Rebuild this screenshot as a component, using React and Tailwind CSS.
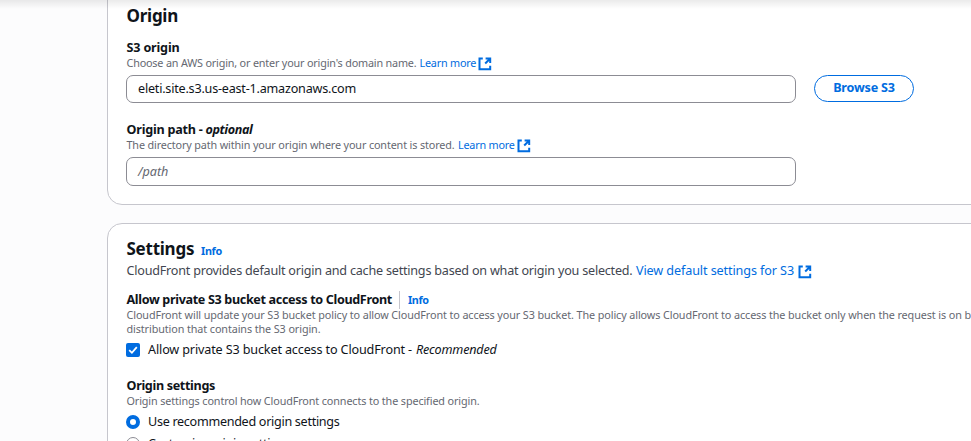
function ExternalIcon({ className = "" }) {
  return (
    <svg className={`shrink-0 ${className}`} width="14" height="14" viewBox="0 0 14 14" fill="none" stroke="#006ce0" strokeWidth="2">
      <path d="M4.8 1.5H1.5v10.7h10.7V8.8" />
      <path d="M7.6 1.5h4.6v4.4M12 1.7 7.2 6.5" />
    </svg>
  );
}

function Label({ children, className = "" }) {
  return <div className={`h-[18px] text-[12.6px] leading-[18px] font-bold text-[#0f141a] ${className}`}>{children}</div>;
}

function Hint({ children, className = "" }) {
  return <div className={`flex h-[14px] text-[10.8px] leading-[14px] text-[#656871] ${className}`}>{children}</div>;
}

function Radio({ checked }) {
  return (
    <span
      className={`size-[14px] shrink-0 rounded-full bg-white ${checked ? "border-[4.5px] border-[#006ce0]" : "border border-[#8c8c94]"}`}
    />
  );
}

export default function App() {
  return (
    <div className="relative h-[441px] w-[971px] overflow-hidden bg-[#fcfcfd] pl-[107px] font-['Noto_Sans','Open_Sans',sans-serif] whitespace-nowrap">
      <div className="absolute inset-x-0 top-0 h-[9px] bg-linear-to-b from-black/8 to-transparent" />

      <section className="-mt-[20px] h-[225px] w-[900px] rounded-[15px] border border-[#c6c6cd] bg-white pt-[26px] pl-[18px]">
        <h2 className="h-[18px] pl-[0.5px] text-[17px] leading-[18px] font-bold tracking-[-0.25px] text-[#0f141a]">Origin</h2>

        <Label className="mt-[14px] pl-[0.5px] tracking-[-0.18px]">S3 origin</Label>
        <Hint className="-mt-px pl-[0.5px] tracking-[-0.176px]">
          <span className="w-[293px]">Choose an AWS origin, or enter your origin's domain name.</span>
          <a className="w-[58.5px] tracking-[-0.2px] text-[#006ce0]">Learn more</a>
          <ExternalIcon className="mt-px" />
        </Hint>
        <div className="mt-[5px] flex items-start gap-[18px]">
          <div className="flex h-[28px] w-[670px] items-center rounded-[7px] border border-[#8c8c94] pl-[11px] text-[12.6px] tracking-[-0.212px] text-[#0f141a]">
            eleti.site.s3.us-east-1.amazonaws.com
          </div>
          <button className="h-[27px] w-[100px] rounded-full border border-[#006ce0] pb-px text-[12.6px] leading-[24px] font-bold tracking-[-0.2px] text-[#006ce0]">
            Browse S3
          </button>
        </div>

        <Label className="mt-[18px] flex gap-[3px] pl-[0.5px] tracking-[-0.23px]">
          <span>Origin path -</span>
          <i className="tracking-[-0.4px]">optional</i>
        </Label>
        <Hint className="-mt-px pl-[0.5px] tracking-[-0.133px]">
          <span className="w-[331.5px]">The directory path within your origin where your content is stored.</span>
          <a className="w-[59px] tracking-[-0.2px] text-[#006ce0]">Learn more</a>
          <ExternalIcon className="mt-px" />
        </Hint>
        <div className="mt-[5px] flex h-[29px] w-[670px] items-center rounded-[7px] border border-[#8c8c94] pt-px pl-[11px] text-[12.6px] text-[#656871] italic">
          /path
        </div>
      </section>

      <section className="mt-[18px] h-[300px] w-[900px] rounded-[15px] border border-[#c6c6cd] bg-white pt-[16px] pl-[18px]">
        <div className="flex h-[18px] items-baseline">
          <h2 className="w-[75px] pl-[0.5px] text-[17px] leading-[18px] font-bold tracking-[-0.25px] text-[#0f141a]">Settings</h2>
          <a className="text-[10.8px] leading-[18px] font-bold tracking-[-0.3px] text-[#006ce0]">Info</a>
        </div>
        <div className="mt-[4px] flex h-[18px] items-center pl-[0.5px] text-[12.6px] leading-[18px] tracking-[-0.22px] text-[#424650]">
          <span className="w-[509.5px]">CloudFront provides default origin and cache settings based on what origin you selected.</span>
          <a className="w-[162px] tracking-[-0.1px] text-[#006ce0]">View default settings for S3</a>
          <ExternalIcon className="mt-px" />
        </div>

        <div className="mt-[11px] flex h-[18px] items-center">
          <Label className="w-[273px] pl-[0.5px] tracking-[-0.345px]">Allow private S3 bucket access to CloudFront</Label>
          <span className="h-[18px] w-px bg-[#c6c6cd]" />
          <a className="ml-[8px] text-[10.8px] leading-[18px] font-bold tracking-[-0.4px] text-[#006ce0]">Info</a>
        </div>
        <Hint className="-mt-px pl-[0.5px] tracking-[-0.101px]">
          CloudFront will update your S3 bucket policy to allow CloudFront to access your S3 bucket. The policy allows
          CloudFront to access the bucket only when the request is on b
        </Hint>
        <Hint className="pl-[0.5px] tracking-[-0.098px]">distribution that contains the S3 origin.</Hint>
        <div className="mt-[5px] flex h-[18px] items-center text-[12.6px] leading-[18px] text-[#0f141a]">
          <span className="flex size-[14px] items-center justify-center rounded-[2px] bg-[#006ce0]">
            <svg width="14" height="14" viewBox="0 0 14 14" fill="none" stroke="white" strokeWidth="1.8">
              <path d="M3.2 7.2 5.9 9.8 10.8 4.2" />
            </svg>
          </span>
          <span className="ml-[8px] w-[268px] tracking-[-0.14px]">Allow private S3 bucket access to CloudFront -</span>
          <i className="tracking-[-0.2px]">Recommended</i>
        </div>

        <Label className="mt-[18px] pl-[0.5px] tracking-[-0.336px]">Origin settings</Label>
        <Hint className="-mt-px pl-[0.5px] tracking-[-0.117px]">Origin settings control how CloudFront connects to the specified origin.</Hint>
        <div className="mt-[5px] flex h-[18px] items-center gap-[8px] text-[12.6px] leading-[18px] text-[#0f141a]">
          <Radio checked />
          <span className="tracking-[-0.3px]">Use recommended origin settings</span>
        </div>
        <div className="mt-[4px] flex h-[18px] items-center gap-[8px] text-[12.6px] leading-[18px] text-[#0f141a]">
          <Radio />
          <span className="tracking-[-0.3px]">Customize origin settings</span>
        </div>
      </section>
    </div>
  );
}
